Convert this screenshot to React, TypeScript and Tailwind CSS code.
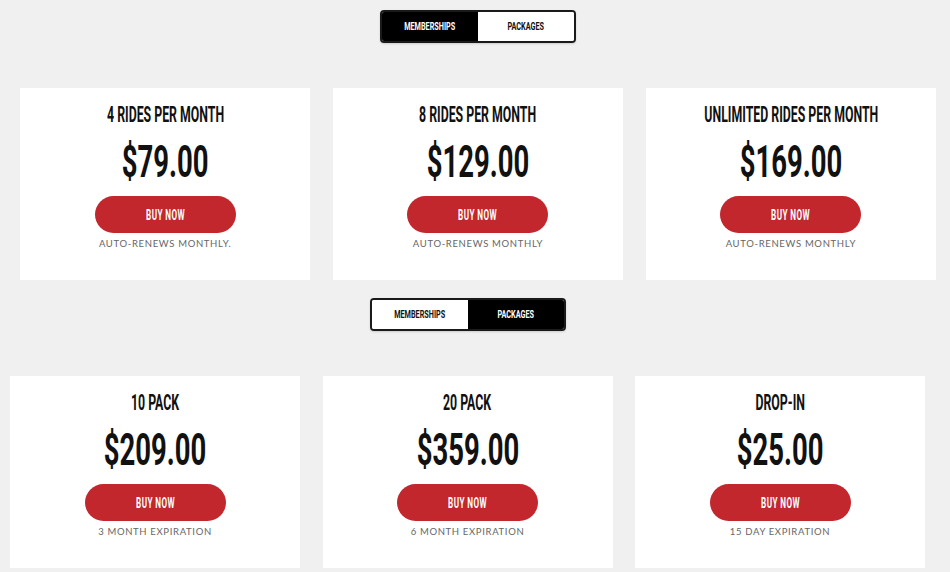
import React from "react";

type Plan = { title: string; price: string; note: string };

const memberships: Plan[] = [
  { title: "4 RIDES PER MONTH", price: "$79.00", note: "AUTO-RENEWS MONTHLY." },
  { title: "8 RIDES PER MONTH", price: "$129.00", note: "AUTO-RENEWS MONTHLY" },
  { title: "UNLIMITED RIDES PER MONTH", price: "$169.00", note: "AUTO-RENEWS MONTHLY" },
];

const packages: Plan[] = [
  { title: "10 PACK", price: "$209.00", note: "3 MONTH EXPIRATION" },
  { title: "20 PACK", price: "$359.00", note: "6 MONTH EXPIRATION" },
  { title: "DROP-IN", price: "$25.00", note: "15 DAY EXPIRATION" },
];

const condensed = "font-['Roboto','Liberation_Sans',sans-serif] font-bold";

const Toggle = ({ active }: { active: "memberships" | "packages" }) => {
  const tab = (label: string, on: boolean) => (
    <div
      className={`flex-1 flex items-center justify-center ${on ? "bg-black text-white" : "bg-white text-[#111]"}`}
    >
      <span className={`${condensed} inline-block text-[11px] leading-none scale-x-[0.66]`}>{label}</span>
    </div>
  );
  return (
    <div className="flex justify-center">
      <div className="flex w-[196px] h-[33px] border-2 border-[#1a1a1a] rounded-[4px] overflow-hidden shadow-[0_1px_2px_rgba(0,0,0,0.15)]">
        {tab("MEMBERSHIPS", active === "memberships")}
        {tab("PACKAGES", active === "packages")}
      </div>
    </div>
  );
};

const PlanCard = ({ plan }: { plan: Plan }) => (
  <div className="bg-white h-[192px] flex flex-col items-center pt-[16px]">
    <h3 className={`${condensed} text-[22px] leading-none text-[#111] scale-x-[0.56] whitespace-nowrap`}>
      {plan.title}
    </h3>
    <div className={`${condensed} mt-[13px] text-[45px] leading-none text-[#111] scale-x-[0.61] whitespace-nowrap`}>
      {plan.price}
    </div>
    <button className="mt-[12px] w-[141px] h-[37px] rounded-full bg-[#c1272d] flex items-center justify-center">
      <span className={`${condensed} inline-block text-[14px] leading-none text-white scale-x-[0.58] tracking-[0.05em]`}>
        BUY NOW
      </span>
    </button>
    <p className="mt-[6px] font-['Lato',sans-serif] text-[9.5px] leading-none tracking-[0.07em] text-[#666]">
      {plan.note}
    </p>
  </div>
);

const Section = ({
  active,
  plans,
  wrap,
}: {
  active: "memberships" | "packages";
  plans: Plan[];
  wrap: string;
}) => (
  <div className={wrap}>
    <Toggle active={active} />
    <div className="grid grid-cols-3 gap-[22.5px] mt-[45px]">
      {plans.map((p) => (
        <PlanCard key={p.title} plan={p} />
      ))}
    </div>
  </div>
);

export default function App() {
  return (
    <div className="w-[950px] h-[572px] bg-[#f0f0f0] overflow-hidden pt-[10px]">
      <Section active="memberships" plans={memberships} wrap="w-[916px] ml-[20px]" />
      <div className="h-[18px]" />
      <Section active="packages" plans={packages} wrap="w-[915px] ml-[10px]" />
    </div>
  );
}
